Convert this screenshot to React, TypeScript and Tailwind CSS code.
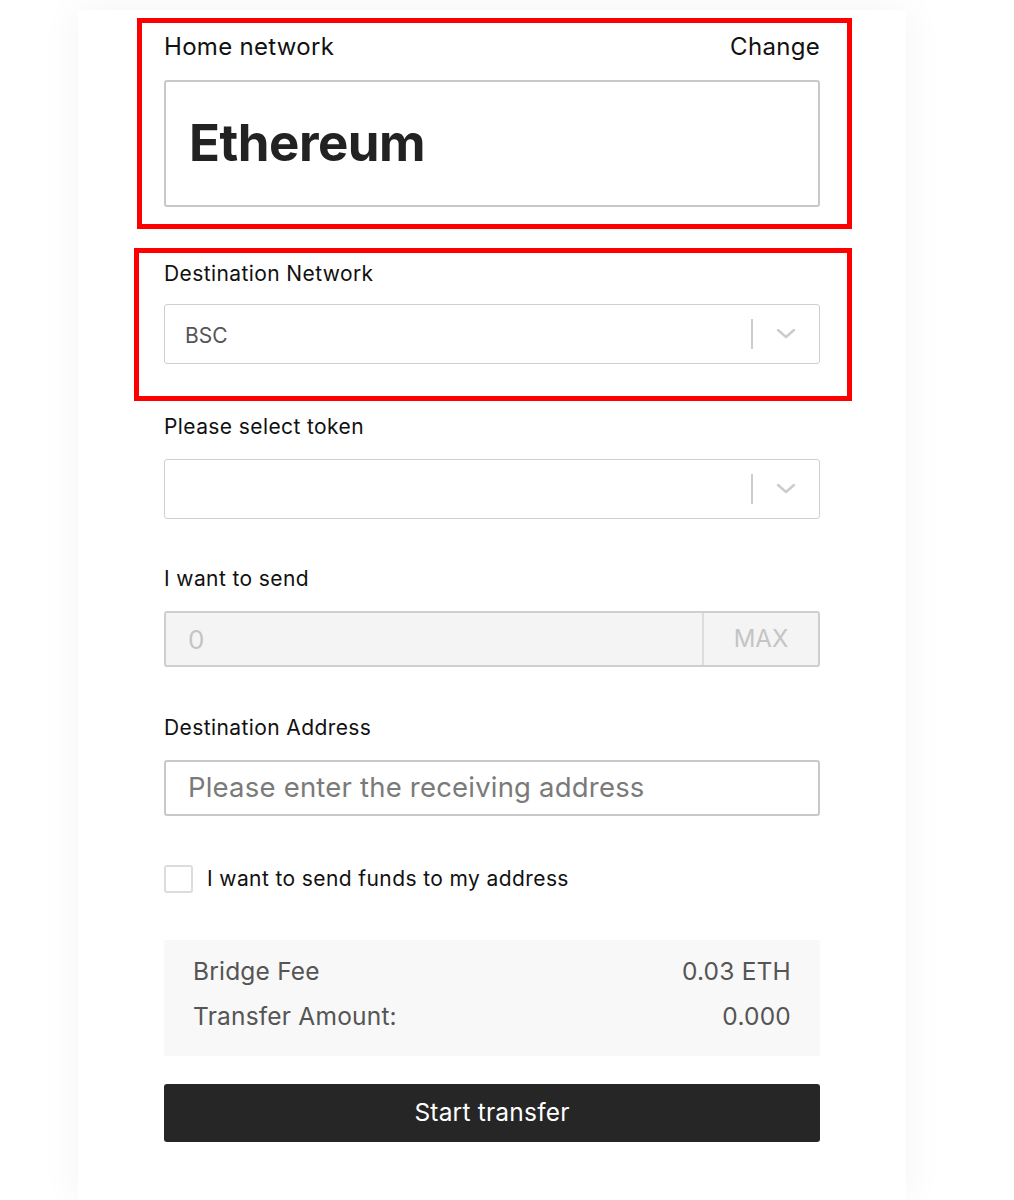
import React from "react";

function Chevron() {
  return (
    <svg width="20" height="12" viewBox="0 0 20 12" fill="none">
      <path d="M2 2 L10 9 L18 2" stroke="#cccccc" strokeWidth="2.5" strokeLinecap="round" strokeLinejoin="round" />
    </svg>
  );
}

function SelectBox({ value }: { value?: string }) {
  return (
    <div className="flex h-[60px] items-center rounded-[3px] border border-[#cfcfcf] bg-white">
      <div className="flex-1 pl-[20px] pt-[4px] text-[21px] text-[#555]">{value}</div>
      <div className="h-[30px] w-[2px] bg-[#cccccc]" />
      <div className="flex w-[66px] items-center justify-center">
        <Chevron />
      </div>
    </div>
  );
}

export default function App() {
  return (
    <div className="min-h-[1200px] bg-white pt-[10px]" style={{ fontFamily: "Inter, Roboto, 'Liberation Sans', sans-serif" }}>
      <div className="ml-[78px] min-h-[1190px] w-[828px] bg-white px-[86px] pt-[8px] shadow-[0_0_40px_rgba(0,0,0,0.05)]">
        <div className="relative pb-[22px] pt-[15px]">
          <div className="pointer-events-none absolute left-[-27px] right-[-32px] top-0 bottom-0 border-[5px] border-[#ff0000]" />
          <div className="flex items-center justify-between text-[24px] leading-[28px] tracking-[0.3px] text-[#111]">
            <span>Home network</span>
            <span>Change</span>
          </div>
          <div className="mt-[19px] flex h-[127px] items-center rounded-[3px] border-2 border-[#c8c8c8] pl-[23px]">
            <span className="text-[51px] font-bold text-[#222] tracking-[-0.5px]">Ethereum</span>
          </div>
        </div>

        <div className="relative mt-[19px] pb-[37px] pt-[12px]">
          <div className="pointer-events-none absolute left-[-30px] right-[-32px] top-0 bottom-0 border-[5px] border-[#ff0000]" />
          <div className="text-[21px] leading-[28px] tracking-[0.4px] text-[#111]">Destination Network</div>
          <div className="mt-[16px]">
            <SelectBox value="BSC" />
          </div>
        </div>

        <div className="mt-[12px] text-[21px] leading-[28px] tracking-[0.4px] text-[#111]">Please select token</div>
        <div className="mt-[18px]">
          <SelectBox />
        </div>

        <div className="mt-[46px] text-[21px] leading-[28px] tracking-[0.4px] text-[#111]">I want to send</div>
        <div className="mt-[18px] flex h-[56px] rounded-[3px] border-2 border-[#cfcfcf] bg-[#f4f4f4]">
          <div className="flex flex-1 items-center pl-[22px] text-[26px] text-[#c4c4c4]">0</div>
          <div className="flex w-[116px] items-center justify-center border-l-2 border-[#dcdcdc] text-[24px] text-[#c4c4c4]">MAX</div>
        </div>

        <div className="mt-[47px] text-[21px] leading-[28px] tracking-[0.4px] text-[#111]">Destination Address</div>
        <div className="mt-[18px] flex h-[56px] items-center rounded-[3px] border-2 border-[#c8c8c8] pl-[22px] text-[27.5px] tracking-[0.2px] text-[#7a7a7a]">
          Please enter the receiving address
        </div>

        <div className="mt-[47px] flex items-center">
          <div className="h-[28px] w-[29px] rounded-[3px] border-2 border-[#dcdcdc]" />
          <span className="ml-[14px] text-[21px] tracking-[0.4px] text-[#111]">I want to send funds to my address</span>
        </div>

        <div className="mt-[45px] rounded-[3px] bg-[#f8f8f8] px-[29px] pb-[23px] pt-[15px] text-[24.5px] tracking-[0.2px] text-[#555]">
          <div className="flex items-center justify-between leading-[33px]">
            <span>Bridge Fee</span>
            <span>0.03 ETH</span>
          </div>
          <div className="mt-[12px] flex items-center justify-between leading-[33px]">
            <span>Transfer Amount:</span>
            <span>0.000</span>
          </div>
        </div>

        <button className="mt-[28px] flex h-[58px] w-full items-center justify-center rounded-[3px] bg-[#262626] text-[24.5px] tracking-[0.2px] text-white">
          Start transfer
        </button>
      </div>
    </div>
  );
}
